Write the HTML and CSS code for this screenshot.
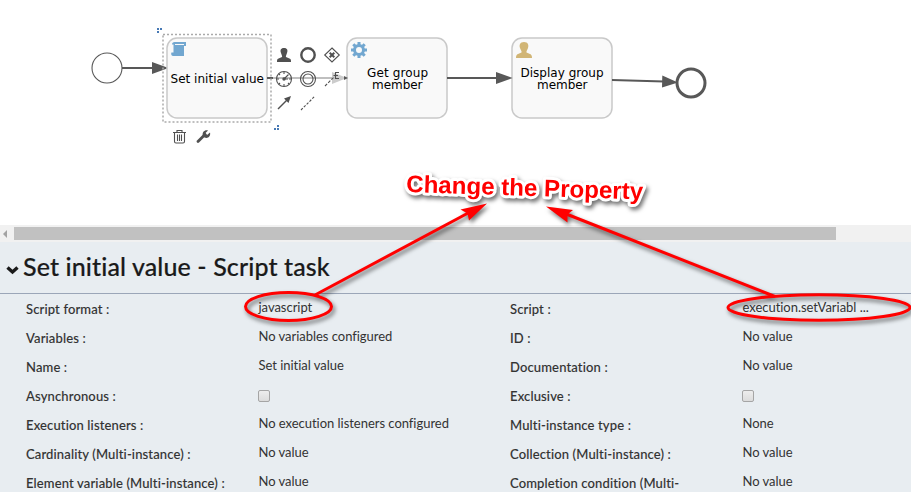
FILE: index.html
```html
<!DOCTYPE html>
<html lang="en">
<head>
<meta charset="utf-8">
<title>Process editor</title>
<link rel="stylesheet" href="styles.css">
</head>
<body>
<main class="editor">
  <svg class="canvas" viewBox="0 0 911 225" width="911" height="225">
    <g class="flow">
      <circle class="event" cx="107" cy="68" r="15"/>
      <path class="edge" d="M122 68H154"/>
      <path class="head" d="M152 62L168.500 68L152 74Z"/>
      <rect class="task" x="167" y="38" width="100" height="80" rx="10"/>
      <rect class="task" x="347" y="38" width="100" height="80" rx="10"/>
      <rect class="task" x="512" y="38" width="100" height="80" rx="10"/>
      <path class="edge" d="M447 78H498"/>
      <path class="head" d="M496 72L512.500 78L496 84Z"/>
      <path class="edge" d="M612 80L664 81.500"/>
      <path class="head" d="M662.300 75.500L678 82.500L662 87.500Z"/>
      <circle class="event end" cx="691" cy="83" r="14"/>
      <path class="edge" d="M267 78H273"/>
      <path class="faded" d="M273 78H333"/>
      <path class="faded-head" d="M332 72L347 78L332 84Z"/>
      <path class="head" d="M344 76L348 78L344 80Z"/>
    </g>
    <rect class="selection" x="163" y="34.500" width="108" height="87.500"/>
    <path class="handle" d="M157 28h2v2h-2zM160 28h2v2h-2zM157 31h2v2h-2zM277 125h2v2h-2zM274 128h2v2h-2zM277 128h2v2h-2z"/>
    <path class="script" d="M174.500 42H186V46H184V56H173C171 56 171 53 171.500 52.500H173.500V44.500H172C172 43 173 42 174.500 42Z"/>
    <path class="curl" d="M175 44.500H184"/>
    <g class="gear" transform="translate(359 50)">
      <circle r="4.500"/>
      <path d="M0-5V-8M0 5V8M-5 0H-8M5 0H8M-3.600-3.600L-5.700-5.700M3.600-3.600L5.700-5.700M-3.600 3.600L-5.700 5.700M3.600 3.600L5.700 5.700"/>
    </g>
    <path class="user" d="M524 42C528 42 529 45 528 48C527.500 50 526 51 526.500 52.500L530 54C531.500 54.500 532 56 532 58H516C516 56 516.500 54.500 518 54L521.500 52.500C522 51 520.500 50 520 48C519 45 520 42 524 42Z"/>
    <g class="label">
      <text x="170.500" y="82.500" textLength="93.500">Set initial value</text>
      <text x="367" y="77" textLength="61">Get group</text>
      <text x="372" y="89" textLength="50.500">member</text>
      <text x="520.500" y="77" textLength="83">Display group</text>
      <text x="537" y="89" textLength="50.500">member</text>
    </g>
    <g class="tools">
      <path class="solid" d="M284 48C287.500 48 288 50.500 287 53C286.500 55 285.500 56 286 57L290 58.800C291 59.500 291 60.500 291 62H277C277 60.500 277 59.500 278 58.800L282 57C282.500 56 281.500 55 281 53C280 50.500 280.500 48 284 48Z"/>
      <circle cx="308" cy="55" r="6.700" stroke-width="2.400"/>
      <path d="M332 48L339.300 55L332 62L324.700 55Z"/>
      <path d="M329.700 52.700L334.300 57.300M334.300 52.700L329.700 57.300" stroke-width="2"/>
      <circle cx="284" cy="79" r="7.500"/>
      <path d="M277 79H279M289 79H291M284 72V74M284 84V86M279 74L280 75M279 84L280 83M289 84L288 83M284 79L288.500 74.500M284 79H288"/>
      <circle class="solid" cx="284" cy="79" r="1.700"/>
      <circle cx="308" cy="79" r="7.500"/>
      <circle cx="308" cy="79" r="5"/>
      <path d="M325 86L334 77" stroke-dasharray="3 1.500"/>
      <path d="M339 72.500H335.500V78.500H339M333.500 75.500H338"/>
      <path d="M278 109L287 100" stroke-width="1.500"/>
      <path class="solid" d="M291 96L288.500 103L284 98.500Z"/>
      <path d="M301 110L315 96" stroke-dasharray="2.500 1.500"/>
      <path d="M173 132.500H186M177 132V130.500H182V132M174.500 133V141.500Q174.500 143 176 143H183Q184.500 143 184.500 141.500V133M177.500 134.500V141M179.500 134.500V141M181.500 134.500V141"/>
      <path d="M198 141.500L205 134.500" stroke-width="2.800" stroke-linecap="round"/>
      <path class="solid" d="M203 136C201.500 132 205 129.500 208 130.500L205.500 133L207 135L210 132.500C211 136 208 139 204.500 137.500Z"/>
    </g>
  </svg>
  <div class="scrollbar"><span class="arrow"></span><span class="thumb"></span></div>
  <section class="panel">
    <header class="title">
      <svg class="chevron" viewBox="0 0 13 10" width="13" height="10"><path d="M1.500 2.500L6.500 7L11.500 2.500"/></svg>
      <h1>Set initial value - Script task</h1>
    </header>
    <div class="props">
      <dl>
        <dt>Script format :</dt><dd>javascript</dd>
        <dt>Variables :</dt><dd>No variables configured</dd>
        <dt>Name :</dt><dd>Set initial value</dd>
        <dt>Asynchronous :</dt><dd><span class="check"></span></dd>
        <dt>Execution listeners :</dt><dd>No execution listeners configured</dd>
        <dt>Cardinality (Multi-instance) :</dt><dd>No value</dd>
        <dt>Element variable (Multi-instance) :</dt><dd>No value</dd>
      </dl>
      <dl>
        <dt>Script :</dt><dd>execution.setVariabl ...</dd>
        <dt>ID :</dt><dd>No value</dd>
        <dt>Documentation :</dt><dd>No value</dd>
        <dt>Exclusive :</dt><dd><span class="check"></span></dd>
        <dt>Multi-instance type :</dt><dd>None</dd>
        <dt>Collection (Multi-instance) :</dt><dd>No value</dd>
        <dt>Completion condition (Multi-</dt><dd>No value</dd>
      </dl>
    </div>
  </section>
  <svg class="notes" viewBox="0 0 911 493" width="911" height="493">
    <ellipse cx="288.500" cy="306.500" rx="43" ry="14"/>
    <ellipse cx="819" cy="307.500" rx="91" ry="12.800"/>
    <path d="M315 295L470 212"/>
    <path class="tip" d="M487 203.500L469 220.500L467.500 213.500L460.500 209.500Z"/>
    <path d="M775 296.500L565 213.500"/>
    <path class="tip" d="M546 206.500L573 210L567.500 214.500L567.500 222.500Z"/>
    <text x="406" y="192" textLength="237" lengthAdjust="spacingAndGlyphs" transform="rotate(1.800 406 192)">Change the Property</text>
  </svg>
</main>
</body>
</html>
```
FILE: styles.css
```css
body { margin: 0; background: #fff; }
.editor { position: relative; width: 911px; height: 493px; overflow: hidden; font-family: Lato, sans-serif; }
.canvas { display: block; }
.event { fill: #fff; stroke: #585858; stroke-width: 1.1; }
.end { stroke-width: 3; }
.edge { stroke: #585858; stroke-width: 2; }
.head { fill: #585858; }
.faded { stroke: #aaa; stroke-width: 1.5; }
.faded-head { fill: #ccc; }
.task { fill: #f9f9f9; stroke: #c9c9c9; stroke-width: 1.5; }
.selection { fill: none; stroke: #aaa; stroke-width: 1.5; stroke-dasharray: 2 2; }
.handle { fill: #4779b5; }
.script { fill: #72a7d0; }
.curl { stroke: #f9f9f9; stroke-width: 1; }
.gear { fill: none; stroke: #72a7d0; stroke-width: 3; }
.user { fill: #d1b575; }
.label { font: 12px "DejaVu Sans", sans-serif; fill: #000; }
.tools { fill: none; stroke: #505050; stroke-width: 1.1; }
.tools .solid { fill: #505050; stroke: none; }
.scrollbar { height: 17px; background: #f1f1f1; display: flex; align-items: center; }
.arrow { width: 0; margin-left: 3px; margin-right: 7px; border: 4px solid transparent; border-left-width: 0; border-right-color: #a3a3a3; }
.thumb { width: 822px; height: 13px; background: #c1c1c1; }
.panel { height: 250px; overflow: hidden; background: #e8edf1; }
.title { display: flex; align-items: flex-start; box-sizing: border-box; height: 52px; padding-left: 6px; border-bottom: 1px solid #9ba6b8; }
.chevron { fill: none; stroke: #1a1a1a; stroke-width: 3.4; margin: 23px 4px 0 0; }
h1 { margin: 0; font-size: 25px; line-height: 48px; font-weight: 500; letter-spacing: .12px; -webkit-text-stroke: .2px #1a1a1a; color: #1a1a1a; white-space: nowrap; }
.props { display: grid; grid-template-columns: 484px 427px; }
dl { display: grid; grid-template-columns: 232.500px 1fr; grid-auto-rows: 29px; margin: 0; padding-left: 26px; font-size: 13px; line-height: 29px; color: #333; white-space: nowrap; }
dt { font-weight: 500; padding-top: 1px; letter-spacing: .14px; -webkit-text-stroke: .1px #333; }
dd { margin: 0; margin-top: -1px; letter-spacing: -.03px; }
.check { display: block; box-sizing: border-box; width: 12px; height: 12px; margin: 10px 0 0 -.6px; border: 1px solid #a5a5a5; border-radius: 2px; background: linear-gradient(#ededed, #dcdcdc); }
.notes { position: absolute; left: 0; top: 0; fill: none; stroke: #f00; stroke-width: 3; filter: drop-shadow(2px 3px 2px rgba(0, 0, 0, .55)); }
.notes .tip { fill: #f00; stroke: none; }
.notes text { font: bold 24px "Liberation Sans", sans-serif; fill: #f00; stroke: #fff; stroke-width: 6px; stroke-linejoin: round; paint-order: stroke; }
```
